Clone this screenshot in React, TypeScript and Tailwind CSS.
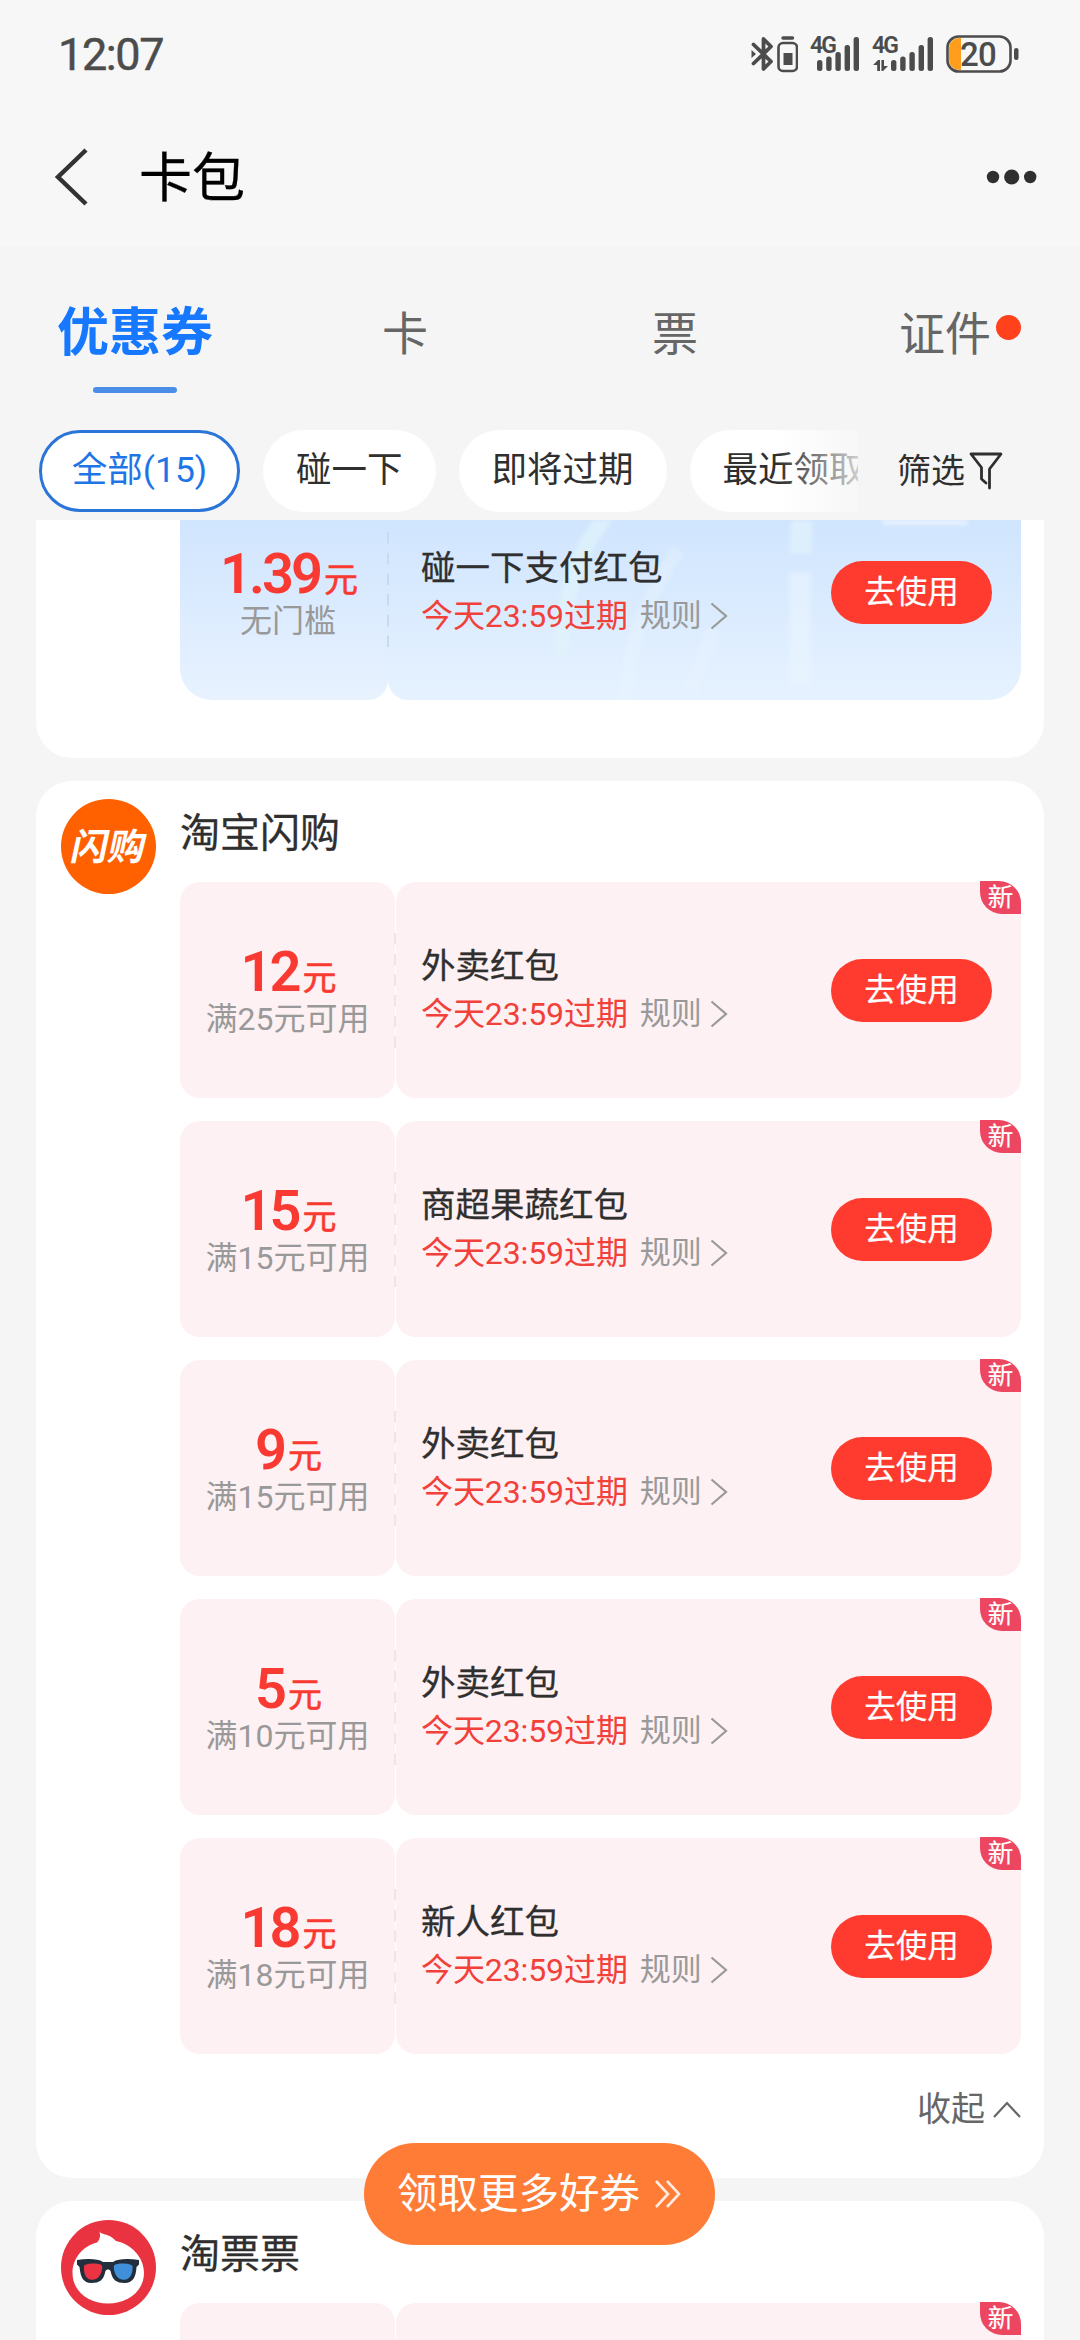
import { ReactNode, useState } from 'react'

type Coupon = {
  id: number;
  amount: string;
  condition: string;
  title: string;
};

const tabs = ['优惠券', '卡', '票', '证件'];
const filters = ['全部(15)', '碰一下', '即将过期', '最近领取'];

const flashCoupons: Coupon[] = [
  { id: 1, amount: '12', condition: '满25元可用', title: '外卖红包' },
  { id: 2, amount: '15', condition: '满15元可用', title: '商超果蔬红包' },
  { id: 3, amount: '9', condition: '满15元可用', title: '外卖红包' },
  { id: 4, amount: '5', condition: '满10元可用', title: '外卖红包' },
  { id: 5, amount: '18', condition: '满18元可用', title: '新人红包' },
];

const SignalBars = () => (
  <svg width="42" height="34" viewBox="0 0 42 34" className="fill-[#4c4c4c]">
    <rect x="0" y="23" width="5.4" height="11" rx="2.5" />
    <rect x="9.2" y="19.5" width="5.4" height="14.5" rx="2.5" />
    <rect x="18.4" y="15" width="5.4" height="19" rx="2.5" />
    <rect x="27.6" y="8" width="5.4" height="26" rx="2.5" />
    <rect x="36.6" y="0" width="5.4" height="34" rx="2.5" />
  </svg>
);

const StatusBar = () => (
  <div className="flex h-[108px] items-center justify-between pr-[61px] pl-[58px] text-[#4c4c4c]">
    <span className="text-[45px] leading-none tracking-[-1.4px] [-webkit-text-stroke:0.5px]">12:07</span>
    <div className="flex items-center">
      <svg width="48" height="38" viewBox="0 0 48 38" fill="none" stroke="#4c4c4c">
        <path d="M3.5 9.5 L21 26.5 L13.500 34 V4 L21 11.5 L3.5 28.5" strokeWidth="3.8" strokeLinejoin="round" strokeLinecap="round" />
        <path d="M1.500 15 L6 19 L1.500 23 Z" fill="#4c4c4c" stroke="none" />
        <rect x="28.500" y="8" width="18.5" height="28" rx="4.5" strokeWidth="2.6" />
        <path d="M33 3 H42.500" strokeWidth="3.4" strokeLinecap="round" />
        <rect x="33.500" y="18" width="9" height="12" fill="#4c4c4c" stroke="none" />
      </svg>
      <div className="relative ml-[19px] flex w-[42px] justify-end">
        <SignalBars />
        <span className="absolute -top-[3px] -left-[7px] text-[23px] leading-none font-semibold tracking-[-2px]">4G</span>
      </div>
      <div className="relative ml-8 flex w-[42px]">
        <SignalBars />
        <span className="absolute -top-[3px] -left-[19px] text-[23px] leading-none font-semibold tracking-[-2px]">4G</span>
        <svg width="15" height="11" viewBox="0 0 15 11" className="absolute bottom-0 -left-[18px] fill-[#4c4c4c]">
          <path d="M0 5 L5 0 H7 V11 H4.2 V5 Z" />
          <path d="M15 6 L10 11 H8.4 V0 H11 V6 Z" />
        </svg>
      </div>
      <div className="relative ml-[13px] flex h-[38px] w-[73px] items-center">
        <svg width="73" height="38" viewBox="0 0 73 38" fill="none">
          <path d="M15 3 H13 A10 10 0 0 0 3 13 V25 A10 10 0 0 0 13 35 H15 Z" fill="#ff9d1c" />
          <rect x="1.5" y="1.5" width="63" height="35" rx="11" stroke="#4c4c4c" strokeWidth="2.6" />
          <rect x="68" y="13" width="4.5" height="12" rx="2.2" fill="#4c4c4c" />
        </svg>
        <span className="absolute top-[3px] left-[14px] text-[33px] leading-none font-medium tracking-[-0.8px]">20</span>
      </div>
    </div>
  </div>
);

const NavBar = () => (
  <div className="flex h-[138px] items-center pr-[43px] pl-[54px]">
    <svg width="36" height="58" viewBox="0 0 36 58" fill="none" stroke="#333" strokeWidth="4.5">
      <path d="M32 2 L4 29 L32 56" />
    </svg>
    <h1 className="ml-[49px] pt-1 text-[53px] leading-none text-black [-webkit-text-stroke:0.3px]">卡包</h1>
    <svg width="52" height="18" viewBox="0 0 52 18" className="ml-auto fill-[#2f2f2f]">
      <circle cx="8" cy="9" r="6.2" />
      <circle cx="26.7" cy="9" r="7.6" />
      <circle cx="45.2" cy="9" r="6.2" />
    </svg>
  </div>
);

const Logo = ({ name }: { name: string }) => {
  if (name === '淘宝闪购') {
    return (
      <div className="flex size-[95px] items-center justify-center rounded-full bg-[#ff6000]">
        <span className="-skew-x-12 pt-0.5 text-[37px] leading-none font-bold text-white">闪购</span>
      </div>
    );
  }
  return (
    <svg width="95" height="95" viewBox="0 0 95 95">
      <circle cx="47.5" cy="47.5" r="47.5" fill="#ea3341" />
      <path d="M38 10.500 C40 16 47 12 55 21 C70 24 83 37 83 53 C83 71 67 83.500 47 83.500 C27 83.500 11.500 71 11.500 53 C11.500 38 22 26 36 22.500 C39 20 40 15 38 10.500 Z" fill="#fff" />
      <path d="M16 40 C26 38.500 37 38.500 42 42 H52 C57 38.500 68 38.500 78 40 V44.500 L75.500 47 C75 58 71 63 64 63 C55 63 51.500 60 49.500 51 C48.500 49 45.500 49 44.500 51 C42.500 60 39 63 30 63 C23 63 19.500 58 18.500 47 L16 44.500 Z" fill="#222e3c" />
      <path d="M23 46 C24 43 38 42.500 41 45.500 C42 50 39 59 33 59.500 C25 61 22.500 54 23 46 Z" fill="#ec3343" />
      <path d="M53 45.500 C56 42.500 70 43 71.500 46 C72 54 69 61 61 59.500 C55 59 52 50 53 45.500 Z" fill="#4090d9" />
    </svg>
  );
};

const Price = ({ amount, condition }: { amount: string; condition: string }) => (
  <>
    <div className="flex h-14 items-start gap-1 pl-0.5 leading-none text-[#f93a32]">
      <span className="text-[56px] leading-[58px] font-semibold tracking-[-3px]">{amount}</span>
      <span className="pt-[15px] text-[34px] leading-10 [-webkit-text-stroke:0.600px]">元</span>
    </div>
    <span className="text-[32px] leading-10 text-[#999]">{condition}</span>
  </>
);

const Detail = ({ title }: { title: string }) => (
  <>
    <div className="flex flex-col">
      <span className="text-[34.500px] leading-12 text-[#2f2f2f] [-webkit-text-stroke:0.300px]">{title}</span>
      <div className="flex items-center text-[32px] leading-12 text-[#f2403a]">
        <span className="tracking-[-0.1px]">今天23:59过期</span>
        <span className="ml-3 text-[31px] text-[#999]">规则</span>
        <svg width="18" height="28" viewBox="0 0 18 28" fill="none" stroke="#999" strokeWidth="2.2" className="ml-2">
          <path d="M1.500 1.500 L16 14 L1.500 26.500" />
        </svg>
      </div>
    </div>
    <button className="ml-auto flex h-[63px] w-[161px] items-center justify-center rounded-full bg-[#ff3b30] pt-px text-[31.500px] text-white [-webkit-text-stroke:0.2px]">
      去使用
    </button>
  </>
);

const Divider = ({ className }: { className: string }) => (
  <svg width="2" height="115" viewBox="0 0 2 115" className={className}>
    <path d="M1 0 V115" strokeWidth="2" strokeDasharray="11.500 9.200" />
  </svg>
);

const Ticket = ({ left, right }: { left?: ReactNode; right?: ReactNode }) => (
  <div className="relative flex h-[216px] w-[841px] shrink-0 gap-px">
    <div className="flex w-[215px] flex-col items-center rounded-[20px] bg-[#fef1f3] pt-[61px]">{left}</div>
    <div className="flex flex-1 items-center rounded-[20px] bg-[#fef1f3] pr-[29px] pl-[25px]">{right}</div>
    <Divider className="absolute top-[51px] left-[214px] stroke-[#f1e3e6]" />
    <span className="absolute -top-px right-0 flex h-[33px] w-[41px] items-center justify-center rounded-tr-[22px] rounded-bl-[22px] bg-[#ec4660] text-[25.500px] leading-none text-white [-webkit-text-stroke:0.2px]">新</span>
  </div>
);

const PayCoupon = () => (
  <div className="relative ml-36 flex h-[180px] w-[841px] bg-white">
    <div className="flex w-[208px] flex-col items-center rounded-br-[20px] rounded-bl-[32px] bg-linear-to-b from-[#d0e5fe] to-[#e8f2ff] pt-[25px] pl-2">
      <Price amount="1.39" condition="无门槛" />
    </div>
    <div className="relative flex flex-1 items-start overflow-hidden rounded-br-[32px] rounded-bl-[20px] bg-linear-to-b from-[#d0e5fe] to-[#e6f2ff] pt-6 pr-[29px] pl-[33px]">
      {/* soft light streaks behind the text */}
      <svg width="633" height="180" viewBox="0 0 633 180" fill="none" className="absolute top-0 left-0 blur-[2px]">
        <path d="M222 -8 C188 30 178 70 172 135" stroke="#e0f3fb" strokeWidth="16" opacity="0.7" />
        <path d="M290 30 C262 75 242 110 238 180" stroke="#e9f5fe" strokeWidth="14" opacity="0.4" />
        <path d="M326 110 L303 170" stroke="#edf6ff" strokeWidth="16" opacity="0.3" />
        <path d="M414 0 L412 34" stroke="#e0f1fc" strokeWidth="22" opacity="0.8" />
        <path d="M412 52 V165" stroke="#ebf6ff" strokeWidth="21" opacity="0.55" />
        <rect x="494" y="-8" width="86" height="13" rx="4" fill="#e9f2ff" />
      </svg>
      <div className="relative flex flex-1 items-center">
        <Detail title="碰一下支付红包" />
      </div>
    </div>
    <Divider className="absolute top-[12px] left-[207px] stroke-[#c9daee]" />
  </div>
);

export default function App() {
  const [activeTab, setActiveTab] = useState<number>(0);
  const [activeFilter, setActiveFilter] = useState<number>(0);

  return (
    <main className="relative flex h-[2340px] w-[1080px] flex-col overflow-hidden bg-[#f5f5f5] font-[Roboto,'Noto_Sans_CJK_SC',sans-serif]">
      <div className="bg-[#f7f7f7]">
        <StatusBar />
        <NavBar />
      </div>

      <nav className="grid h-[184px] shrink-0 grid-cols-4 pt-[58px]">
        {tabs.map((tab, index) => {
          const isActive = index === activeTab;
          return (
            <div key={tab} onClick={() => setActiveTab(index)} className="flex flex-col items-center">
              <span className={`relative h-[60px] leading-[60px] ${isActive ? 'text-[52px] font-bold text-[#1677ff]' : 'text-[46px] text-[#666]'}`}>
                {tab}
                {tab === '证件' && <i className="absolute top-[11px] -right-[30px] size-[25px] rounded-full bg-[#ff411c]"></i>}
              </span>
              {isActive && <div className="mt-[23px] h-1.5 w-[84px] rounded-full bg-[#4a8ee8]"></div>}
            </div>
          );
        })}
      </nav>

      <div className="flex h-[90px] shrink-0 items-start pl-[39px]">
        <div className="relative flex w-[819px] gap-[23px] overflow-hidden">
          {filters.map((item, index) => (
            <button
              key={item}
              onClick={() => setActiveFilter(index)}
              className={`flex h-[82px] shrink-0 items-center justify-center rounded-full bg-white text-[35.500px] ${index === activeFilter ? 'w-[201px] border-3 border-[#2b74d8] text-[#1f75e6]' : 'px-[33px] text-[#2f2f2f]'}`}
            >
              {item}
            </button>
          ))}
          <div className="absolute inset-y-0 right-0 w-20 bg-linear-to-r from-[#f5f5f5]/0 to-[#f5f5f5]/80"></div>
        </div>
        <div className="ml-[39px] flex h-[82px] items-center text-[34px] text-[#2f2f2f]">
          筛选
          <svg width="34" height="38" viewBox="0 0 34 38" fill="none" stroke="#2f2f2f" strokeWidth="2.8" strokeLinejoin="round" strokeLinecap="round" className="ml-1">
            <path d="M20.500 36 V17 L32 2 H2 L12.500 15.500 V27 L17 31" />
          </svg>
        </div>
      </div>

      <div className="flex flex-col gap-[23px] px-9">
        <section className="h-[238px] shrink-0 rounded-b-[36px] bg-white">
          <PayCoupon />
        </section>

        <section className="flex h-[1397px] shrink-0 rounded-[36px] bg-white pt-[18px] pl-[25px]">
          <Logo name="淘宝闪购" />
          <div className="ml-6 flex flex-col">
            <h2 className="h-[83px] text-[40px] leading-[70px] text-[#2f2f2f] [-webkit-text-stroke:0.300px]">淘宝闪购</h2>
            <div className="flex flex-col gap-[23px]">
              {flashCoupons.map(({ id, amount, condition, title }) => (
                <Ticket
                  key={id}
                  left={<Price amount={amount} condition={condition} />}
                  right={<Detail title={title} />}
                />
              ))}
            </div>
            <div className="mt-[27px] flex h-14 items-center justify-end text-[34px] text-[#666]">
              收起
              <svg width="28" height="17" viewBox="0 0 28 17" fill="none" stroke="#666" strokeWidth="2.2" className="ml-2">
                <path d="M1 16 L14 2 L27 16" />
              </svg>
            </div>
          </div>
        </section>

        <section className="flex h-[340px] shrink-0 rounded-[36px] bg-white pt-[19px] pl-[25px]">
          <Logo name="淘票票" />
          <div className="ml-6 flex flex-col">
            <h2 className="h-[83px] text-[40px] leading-[70px] text-[#2f2f2f] [-webkit-text-stroke:0.300px]">淘票票</h2>
            <Ticket />
          </div>
        </section>
      </div>

      <button className="absolute bottom-[95px] left-[364px] flex h-[102px] w-[351px] items-center justify-center rounded-full bg-[#ff7c37] text-[40.500px] text-white">
        领取更多好券
        <svg width="28" height="30" viewBox="0 0 28 30" fill="none" stroke="#fff" strokeWidth="2.6" opacity="0.85" className="ml-3.5">
          <path d="M2 2 L14 15 L2 28 M13 2 L25 15 L13 28" />
        </svg>
      </button>
    </main>
  )
}
